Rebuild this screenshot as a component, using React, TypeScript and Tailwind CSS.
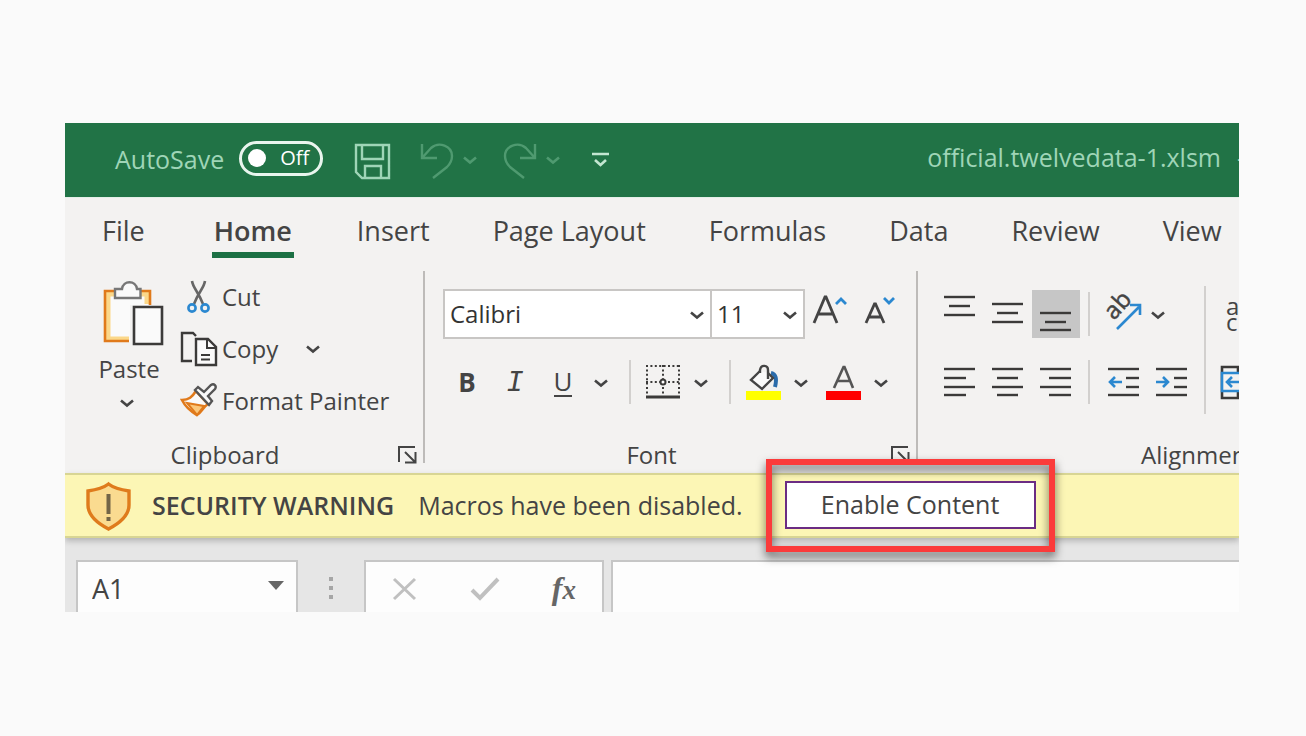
import type { ReactNode } from 'react'

const TABS = ['File', 'Home', 'Insert', 'Page Layout', 'Formulas', 'Data', 'Review', 'View']

function Chevron({ className = 'text-[#444]' }: { className?: string }) {
  return (
    <svg width="14" height="9" viewBox="0 0 14 9" className={className} fill="none" stroke="currentColor" strokeWidth="2.6">
      <path d="M1 1.5l6 5 6-5" />
    </svg>
  )
}

function Launcher() {
  return (
    <svg width="20" height="18" viewBox="0 0 20 18" fill="none" stroke="#444" strokeWidth="2">
      <path d="M1 16V1h16M7 6l10 10M17.500 6v10.500H7" />
    </svg>
  )
}

function Group({ label, launcher, className, children }: { label: string; launcher?: boolean; className: string; children: ReactNode }) {
  return (
    <section aria-label={label} className={`relative flex h-48 shrink-0 flex-col ${className}`}>
      {children}
      <div className="mt-auto text-center text-[24px] leading-[16px]">{label}</div>
      {launcher && (
        <button aria-label={`${label} settings`} className="absolute right-[5px] -bottom-px">
          <Launcher />
        </button>
      )}
    </section>
  )
}

function Tool({ label, active, children }: { label: string; active?: boolean; children: ReactNode }) {
  return (
    <button aria-label={label} className={`flex h-12 w-12 shrink-0 items-center justify-center ${active ? 'bg-[#c6c6c6]' : ''}`}>
      {children}
    </button>
  )
}

function Drop({ label }: { label: string }) {
  return (
    <button aria-label={label} className="flex h-12 w-7 shrink-0 items-center justify-center pt-0.5">
      <Chevron />
    </button>
  )
}

function Divider({ className }: { className: string }) {
  return <div className={`h-11 w-0.5 shrink-0 bg-[#d2d0ce] ${className}`} />
}

// each line is [x1, x2, y]
function Lines({ rows, children }: { rows: number[][]; children?: ReactNode }) {
  return (
    <svg width="48" height="48" viewBox="0 0 48 48" fill="none" stroke="#3b3a39" strokeWidth="2.400">
      {rows.map(([a, b, y]) => (
        <path key={y} d={`M${a} ${y}H${b}`} />
      ))}
      {children}
    </svg>
  )
}

function TitleBar() {
  return (
    <header className="flex h-[75px] items-center border-b border-[#e4efe8] bg-[#217346] pl-[50px] text-[#9fd5b7]">
      <label className="flex shrink-0 items-center gap-[15px] text-[25px]">
        AutoSave
        <input type="checkbox" role="switch" className="peer sr-only" />
        <span className="mb-1 flex h-[35px] w-[84px] items-center gap-3.5 rounded-full border-[3px] border-[#e9f5ee] pl-1.5 text-[20px] text-white">
          <span className="h-[18px] w-[18px] rounded-full bg-white" />
          Off
        </span>
      </label>
      <button aria-label="Save" className="ml-[31px] shrink-0 pt-1">
        <svg width="38" height="38" viewBox="0 0 38 38" fill="none" stroke="currentColor" strokeWidth="2.400">
          <path d="M2 2h33v33H8l-6-6zM8 2v14h21V2M11 35V23h16v12" />
        </svg>
      </button>
      <div className="ml-[27px] flex shrink-0 items-center text-[#4f9a70]">
        <button aria-label="Undo">
          <svg width="36" height="38" viewBox="0 0 36 38" fill="none" stroke="currentColor" strokeWidth="2.400">
            <path d="M3 3v14h15M3 17L12 7C20 0 33 5 33 15c0 5-2 8-5 11L14 37" />
          </svg>
        </button>
        <button aria-label="Undo history" className="ml-2">
          <Chevron className="text-[#4f9a70]" />
        </button>
        <button aria-label="Redo" className="ml-[25px]">
          <svg width="36" height="38" viewBox="0 0 36 38" fill="none" stroke="currentColor" strokeWidth="2.400">
            <path d="M33 3v14H18M33 17L24 7C16 0 3 5 3 15c0 5 2 8 5 11l14 11" />
          </svg>
        </button>
        <button aria-label="Redo history" className="ml-2">
          <Chevron className="text-[#4f9a70]" />
        </button>
      </div>
      <button aria-label="Customize toolbar" className="ml-8 shrink-0">
        <svg width="17" height="16" viewBox="0 0 17 16" fill="none" stroke="#c3e6d1" strokeWidth="2.600">
          <path d="M0 2h17M3 8l5.500 5L14 8" />
        </svg>
      </button>
      <div className="-mr-[6px] ml-auto flex shrink-0 gap-4 pb-1 text-[25px]">
        <span>official.twelvedata-1.xlsm</span>
        <span>-</span>
      </div>
    </header>
  )
}

function Clipboard() {
  return (
    <Group label="Clipboard" launcher className="w-[360px] border-r-2 border-[#bdbbb9] pr-[38px]">
      <div className="flex pl-[33px]">
        <button className="flex w-[62px] flex-col items-center pt-2 text-[24px] leading-9">
          <svg width="62" height="70" viewBox="0 0 62 70" fill="none" className="mb-0.5 overflow-visible">
            <path d="M8 13h43v50H8z" fill="#fafafa" />
            <path d="M31 60H10V15h8M42 15h7v10" stroke="#fbd88a" strokeWidth="5" />
            <path d="M31 62H7V12h10M42 12h10v15" stroke="#e07a1b" strokeWidth="2.600" />
            <path d="M17 10h7c1-9 14-9 15 0h3.500v9H17z" fill="#fafafa" stroke="#777" strokeWidth="2.400" />
            <path d="M32 26h32v43H32z" fill="#f3f2f1" />
            <path d="M36 28h28v37H36z" fill="#fafafa" stroke="#3b3a39" strokeWidth="2.600" />
          </svg>
          Paste
          <span className="flex h-8 items-center pr-1">
            <Chevron />
          </span>
        </button>
        <div className="ml-5 flex flex-col text-[24px]">
          <button className="flex h-[52px] items-center gap-1">
            <svg width="38" height="38" viewBox="0 0 38 38" fill="none">
              <path d="M12 3c1 7 6 10 11 23M25 3c-1 7-6 10-11 23" stroke="#666" strokeWidth="2.600" />
              <circle cx="12" cy="30" r="3.600" stroke="#2b88d0" strokeWidth="2.600" />
              <circle cx="25" cy="30" r="3.600" stroke="#2b88d0" strokeWidth="2.600" />
            </svg>
            Cut
          </button>
          <div className="flex h-[52px] items-center">
            <button className="flex items-center gap-1">
              <svg width="38" height="38" viewBox="0 0 38 38" fill="none" stroke="#3b3a39" strokeWidth="2.400">
                <path d="M12 31H2V3h11l3 3" />
                <path d="M16 9h12l8 8v18H16z" fill="#fafafa" />
                <path d="M27 9v9h9M21 25h9M21 29.500h9" strokeWidth="2" />
              </svg>
              Copy
            </button>
            <button aria-label="Copy options" className="ml-7">
              <Chevron />
            </button>
          </div>
          <button className="flex h-[52px] items-center gap-1">
            <svg width="38" height="38" viewBox="0 0 38 38" fill="none" strokeWidth="2.600">
              <path d="M2 18c7 0 10-3 14-9l12 13c-5 3-6 8-11 11C10 29 5 24 2 18z" fill="#fafafa" stroke="#e07a1b" />
              <path d="M7 21l17 3-7 9z" fill="#fbc77a" stroke="#e07a1b" strokeWidth="2" />
              <path d="M15 8l3-3 6 5 7-7c3-2 6 1 4 4l-7 7 4 5-3 4z" fill="#fafafa" stroke="#555" strokeWidth="2.400" />
            </svg>
            Format Painter
          </button>
        </div>
      </div>
    </Group>
  )
}

function FontGroup() {
  return (
    <Group label="Font" launcher className="w-[493px] border-r-2 border-[#bdbbb9] pr-14 pl-[18px] pt-[18px]">
      <div className="flex">
        <div className="relative shrink-0">
          <select aria-label="Font name" className="h-[50px] w-[269px] appearance-none border-2 border-[#c8c6c4] bg-white pl-[5px] text-[24px] text-[#333]">
            <option>Calibri</option>
          </select>
          <span className="pointer-events-none absolute top-[22px] right-2">
            <Chevron />
          </span>
        </div>
        <div className="relative -ml-0.5 shrink-0">
          <select aria-label="Font size" className="h-[50px] w-[95px] appearance-none border-2 border-[#c8c6c4] bg-white pl-[5px] text-[24px] text-[#333]">
            <option>11</option>
          </select>
          <span className="pointer-events-none absolute top-[22px] right-2">
            <Chevron />
          </span>
        </div>
        <Tool label="Increase font size">
          <svg width="48" height="48" viewBox="0 0 48 48" fill="none" stroke="#444" strokeWidth="2.800">
            <path d="M9 34L20 8h1l11 26M13 25h15" />
            <path d="M31 15l5-5 5 5" stroke="#2b88d0" />
          </svg>
        </Tool>
        <Tool label="Decrease font size">
          <svg width="48" height="48" viewBox="0 0 48 48" fill="none" stroke="#444" strokeWidth="2.800">
            <path d="M13 34l8.500-19h1L31 34M16 28h12" />
            <path d="M31 9l5 5 5-5" stroke="#2b88d0" />
          </svg>
        </Tool>
      </div>
      <div className="mt-[19px] flex items-center text-[26px]">
        <Tool label="Bold">
          <span className="font-bold">B</span>
        </Tool>
        <Tool label="Italic">
          <span className="pt-1 font-['Liberation_Mono'] text-[29px] italic">I</span>
        </Tool>
        <Tool label="Underline">
          <span className="border-b-2 border-[#444] leading-[28px]">U</span>
        </Tool>
        <Drop label="Underline style" />
        <Divider className="mr-2 ml-3.5" />
        <Tool label="Borders">
          <svg width="48" height="48" viewBox="0 0 48 48" fill="none" stroke="#3b3a39" strokeWidth="2">
            <path d="M7 8h34M7 24h34M8 7v30M24 7v30M40 7v30" strokeDasharray="2 2.400" />
            <circle cx="24" cy="24" r="2.500" fill="#fff" />
            <path d="M7 39h34" strokeWidth="2.800" />
          </svg>
        </Tool>
        <Drop label="Border style" />
        <Divider className="mr-2 ml-3.5" />
        <Tool label="Fill color">
          <svg width="48" height="48" viewBox="0 0 48 48" fill="none" stroke="#444" strokeWidth="2.400">
            <path d="M32 15c5 1 6 6 4 14" stroke="#2b6cab" strokeWidth="4" />
            <path d="M21 13l-9 9 11 9 11-11-5-5" fill="#fafafa" />
            <path d="M21 15v-3c1-6 8-5 8 0v9" />
            <path d="M7 33h35v9H7z" fill="#ff0" stroke="none" />
          </svg>
        </Tool>
        <Drop label="Fill color options" />
        <div className="w-1 shrink-0" />
        <Tool label="Font color">
          <svg width="48" height="48" viewBox="0 0 48 48" fill="none" stroke="#555" strokeWidth="2.600">
            <path d="M15 30l9.500-21h1L34 30M18 23h13" />
            <path d="M7 33h35v9H7z" fill="#f00" stroke="none" />
          </svg>
        </Tool>
        <Drop label="Font color options" />
      </div>
    </Group>
  )
}

function Alignment() {
  return (
    <Group label="Alignment" className="w-[560px] pt-[19px]">
      <div className="flex pl-[18px]">
        <div className="shrink-0">
          <div className="flex items-center">
            <Tool label="Top align"><Lines rows={[[8, 39, 7], [13, 34, 16], [8, 39, 25]]} /></Tool>
            <Tool label="Middle align"><Lines rows={[[8, 39, 14], [13, 34, 23], [8, 39, 32]]} /></Tool>
            <Tool label="Bottom align" active><Lines rows={[[8, 39, 23], [13, 34, 32], [8, 39, 40]]} /></Tool>
            <Divider className="mr-2.5 ml-2" />
            <Tool label="Orientation">
              <svg width="48" height="48" viewBox="0 0 48 48" fill="none">
                <text x="14" y="31" transform="rotate(-48 14 31)" fontSize="24" fill="#444" stroke="#444" strokeWidth="0.500">ab</text>
                <path d="M17 39l22-22M30 15h10v10" stroke="#2b88d0" strokeWidth="2.600" />
              </svg>
            </Tool>
            <div className="-ml-1">
              <Drop label="Orientation options" />
            </div>
          </div>
          <div className="mt-5 flex items-center">
            <Tool label="Align left"><Lines rows={[[8, 39, 11], [8, 30, 20], [8, 39, 29], [8, 30, 37]]} /></Tool>
            <Tool label="Center"><Lines rows={[[8, 39, 11], [13, 34, 20], [8, 39, 29], [13, 34, 37]]} /></Tool>
            <Tool label="Align right"><Lines rows={[[8, 39, 11], [17, 39, 20], [8, 39, 29], [17, 39, 37]]} /></Tool>
            <Divider className="mr-2.5 ml-2" />
            <Tool label="Decrease indent">
              <Lines rows={[[8, 39, 11], [26, 39, 20], [26, 39, 29], [8, 39, 37]]}>
                <path d="M10 24h12M15 19l-5 5 5 5" stroke="#2b88d0" strokeWidth="2.600" />
              </Lines>
            </Tool>
            <Tool label="Increase indent">
              <Lines rows={[[8, 39, 11], [26, 39, 20], [26, 39, 29], [8, 39, 37]]}>
                <path d="M8 24h12M15 19l5 5-5 5" stroke="#2b88d0" strokeWidth="2.600" />
              </Lines>
            </Tool>
          </div>
        </div>
        <div className="-mt-1 ml-2 h-32 w-0.5 shrink-0 bg-[#d2d0ce]" />
        <div className="ml-2 flex shrink-0 flex-col gap-5">
          <button aria-label="Wrap text" className="flex h-12 w-12 items-center pl-3 text-left text-[24px] leading-[16px]">
            <span>ab<br />c</span>
          </button>
          <Tool label="Merge and center">
            <svg width="48" height="48" viewBox="0 0 48 48" fill="none" stroke="#3b3a39" strokeWidth="2.600">
              <path d="M8 9h33v31H8zM24 9v31" />
              <path d="M8 15h33v18H8z" fill="#f3f2f1" stroke="#2b88d0" />
              <path d="M13 24h23M18 19l-5 5 5 5M31 19l5 5-5 5" stroke="#2b88d0" />
            </svg>
          </Tool>
        </div>
      </div>
    </Group>
  )
}

function SecurityBar() {
  return (
    <div role="alert" className="relative flex h-[65px] items-center border-y-2 border-[#d8d594] bg-[#fcf6b5] pl-5 text-[25px] whitespace-nowrap shadow-[0_3px_6px_rgba(0,0,0,0.22)]">
      <svg width="47" height="50" viewBox="0 0 47 50" fill="#fadb90" stroke="#df7b1c" strokeWidth="3.400" className="shrink-0">
        <path d="M23.500 3C17 8 10 9 3 10v14c0 11 9 18 20.500 24C35 42 44 35 44 24V10C37 9 30 8 23.500 3z" />
        <path d="M23.500 13v20M23.500 36v4" stroke="#736447" strokeWidth="4" />
      </svg>
      <strong className="ml-5 font-semibold">SECURITY WARNING</strong>
      <span className="ml-6">Macros have been disabled.</span>
      <div className="relative mb-0.5 ml-[42px] shrink-0">
        <div className="pointer-events-none absolute -inset-x-[19px] -top-[22px] -bottom-[23px] border-[6px] border-[#fb3b3b] drop-shadow-[0_5px_5px_rgba(0,0,0,0.6)]" />
        <button className="relative h-12 w-[251px] border-2 border-[#6b2c83] bg-white">Enable Content</button>
      </div>
    </div>
  )
}

function FormulaBar() {
  return (
    <div className="flex h-[74px] items-stretch bg-[#e6e6e6] pt-[22px] pl-[11px]">
      <div className="flex w-[222px] shrink-0 items-center border-2 border-b-0 border-[#c6c6c6] bg-[#fdfdfd] pt-1 pr-3">
        <input aria-label="Name box" defaultValue="A1" className="w-full min-w-0 bg-transparent pl-3.5 text-[27px] outline-none" />
        <svg width="16" height="9" viewBox="0 0 16 9" className="mb-2 shrink-0" fill="#666">
          <path d="M0 0h16L8 9z" />
        </svg>
      </div>
      <svg width="66" height="52" viewBox="0 0 66 52" className="shrink-0" fill="#a6a6a6">
        <path d="M31 17h4v4h-4zM31 26h4v4h-4zM31 35h4v4h-4z" />
      </svg>
      <div className="flex w-[240px] shrink-0 items-center justify-between border-2 border-b-0 border-[#c6c6c6] bg-[#fdfdfd] px-[26px] pt-1">
        <button aria-label="Cancel">
          <svg width="26" height="24" viewBox="0 0 26 24" stroke="#c0c0c0" strokeWidth="3">
            <path d="M2 2l21 20M23 2L2 22" />
          </svg>
        </button>
        <button aria-label="Enter">
          <svg width="30" height="26" viewBox="0 0 30 26" fill="none" stroke="#c0c0c0" strokeWidth="4">
            <path d="M2 14l8 8L28 3" />
          </svg>
        </button>
        <button aria-label="Insert function" className="font-['Liberation_Serif'] text-[32px] leading-[30px] font-bold text-[#666] italic">
          f<span className="text-[27px]">x</span>
        </button>
      </div>
      <input aria-label="Formula" className="ml-[7px] min-w-0 flex-1 border-t-2 border-l-2 border-[#c6c6c6] bg-[#fdfdfd] px-3 text-[24px] outline-none" />
    </div>
  )
}

export default function App() {
  return (
    <div className="flex min-h-screen items-center bg-[#fafafa] pr-[67px] pb-px pl-[65px] font-['Open_Sans',sans-serif] text-[#444]">
      <main className="w-full overflow-hidden bg-[#f3f2f1]">
        <TitleBar />
        <nav className="flex h-[73px] items-start gap-[63px] pt-3 pl-[37px] text-[27px] leading-[42px] whitespace-nowrap">
          {TABS.map((tab) => (
            <a
              key={tab}
              href={`#${tab.replace(' ', '-').toLowerCase()}`}
              className={tab === 'Home' ? 'ml-1 border-b-6 border-[#1c7044] px-0.5 font-semibold' : ''}
            >
              {tab}
            </a>
          ))}
        </nav>
        <div className="flex h-[202px] whitespace-nowrap">
          <Clipboard />
          <FontGroup />
          <Alignment />
        </div>
        <SecurityBar />
        <FormulaBar />
      </main>
    </div>
  )
}
